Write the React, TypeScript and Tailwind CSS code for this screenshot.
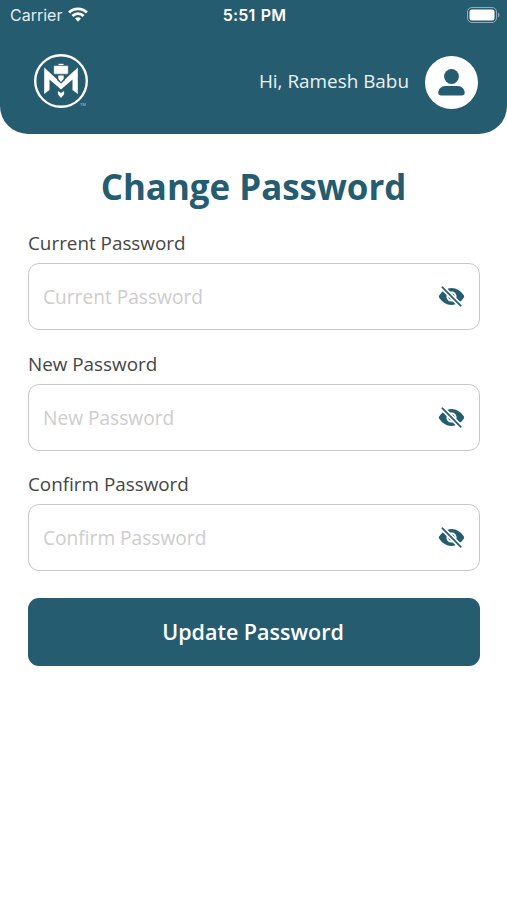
import { IoEyeOff } from 'react-icons/io5';

function WifiIcon() {
  return (
    <svg className="ml-[6px] h-[15px] w-5" viewBox="0 0 21 15" fill="none" stroke="white" strokeWidth="3">
      <path d="M1.2 5.4a13.2 13.2 0 0 1 18.6 0" />
      <path d="M4.7 9a8.2 8.2 0 0 1 11.6 0" />
      <path d="M10.5 15 7.4 11.8a4.4 4.4 0 0 1 6.2 0z" fill="white" stroke="none" />
    </svg>
  );
}

function BatteryIcon() {
  return (
    <svg className="h-4 w-[33px]" viewBox="0 0 33 16">
      <rect x="0.5" y="0.5" width="29" height="15" rx="4.5" fill="none" stroke="#8faebb" />
      <rect x="2.5" y="2.5" width="25" height="11" rx="2.5" fill="white" />
      <path d="M31 5.5c1.8.7 1.8 4.3 0 5z" fill="#8faebb" />
    </svg>
  );
}

function Logo() {
  return (
    <svg className="h-[54px] w-[54px] overflow-visible" viewBox="0 0 54 54">
      <circle cx="27" cy="27" r="25.8" fill="none" stroke="white" strokeWidth="2.4" />
      <path d="M10.2 13.5 27 29 43.8 13.5V40L38.500 36V25.500L27 35.500 15.500 25.500V36L10.2 40z" fill="white" />
      <path d="M23 19.500h8V26L27 29.500 23 26z" fill="#255c70" />
      <path d="M24.500 9.800h5v1.300h-5z" fill="white" />
      <rect x="19.7" y="11.6" width="14.6" height="8.600" rx="1" fill="white" stroke="#255c70" strokeWidth="0.6" />
      <path d="M24.300 21.500h5.400v3.200L27 28l-2.700-3.300z" fill="white" />
      <path d="M23.900 37 27 39l3.100-2v3.300L27 44l-3.100-3.700z" fill="white" />
      <text x="46" y="51.5" fill="#b5cad2" className="font-['Liberation_Sans'] text-[4px]">TM</text>
    </svg>
  );
}

function Avatar() {
  return (
    <button aria-label="Profile" className="mt-[2px] flex size-[53px] items-center justify-center rounded-full bg-white">
      <svg className="h-[27px] w-[27px]" viewBox="0 0 27 27" fill="#255c70">
        <circle cx="13.5" cy="7.5" r="7.4" />
        <path d="M0.3 23.8C0.3 19.8 3.4 16.900 7.200 16.900H19.800C23.600 16.900 26.700 19.800 26.700 23.800C26.700 25.500 25.600 26.400 24 26.400H3C1.400 26.400 0.300 25.500 0.300 23.800z" />
      </svg>
    </button>
  );
}

function PasswordField({ label }: { label: string }) {
  return (
    <label className="block h-[120.6px]">
      <span className="block h-[31px] text-[18.85px] leading-[22px] text-[#454545]">{label}</span>
      <span className="flex h-[67px] items-center rounded-[11px] border border-[#c8c8c8] px-[14px]">
        <input
          type="password"
          placeholder={label}
          className="min-w-0 flex-1 bg-transparent pt-[2px] text-[19.15px] outline-none placeholder:text-[#cdcdcd]"
        />
        <IoEyeOff className="size-[27px] text-[#255c70]" />
      </span>
    </label>
  );
}

export default function App() {
  return (
    <div className="h-[900px] w-full overflow-hidden bg-white font-['Open_Sans','Noto_Sans',sans-serif]">
      <header className="h-[134px] rounded-b-[28px] bg-[#255c70] text-white">
        <div className="grid h-[29px] grid-cols-[1fr_auto_1fr] items-center pl-[10px] pr-[7px] font-['Inter',sans-serif] text-[16px]">
          <div className="flex items-center text-[#e4edf0]">
            Carrier
            <WifiIcon />
          </div>
          <div className="pr-px font-semibold tracking-[0.2px] [word-spacing:1px]">5:51 PM</div>
          <div className="flex justify-end">
            <BatteryIcon />
          </div>
        </div>
        <div className="flex h-[104px] items-center pl-[34px] pr-[29px]">
          <Logo />
          <span className="ml-auto mr-4 text-[18.9px] text-[#eaf1f4]">Hi, Ramesh Babu</span>
          <Avatar />
        </div>
      </header>
      <main className="pl-7 pr-[27px] pt-[28px]">
        <h1 className="pr-px text-center text-[34.9px] font-bold leading-[49px] text-[#255c70]">Change Password</h1>
        <form className="pt-[21px]">
          <PasswordField label="Current Password" />
          <PasswordField label="New Password" />
          <PasswordField label="Confirm Password" />
          <button type="button" className="mt-[4px] h-[68px] w-full rounded-[11px] bg-[#255c70] pr-[2px] text-[21.5px] font-semibold text-white">
            Update Password
          </button>
        </form>
      </main>
    </div>
  );
}
